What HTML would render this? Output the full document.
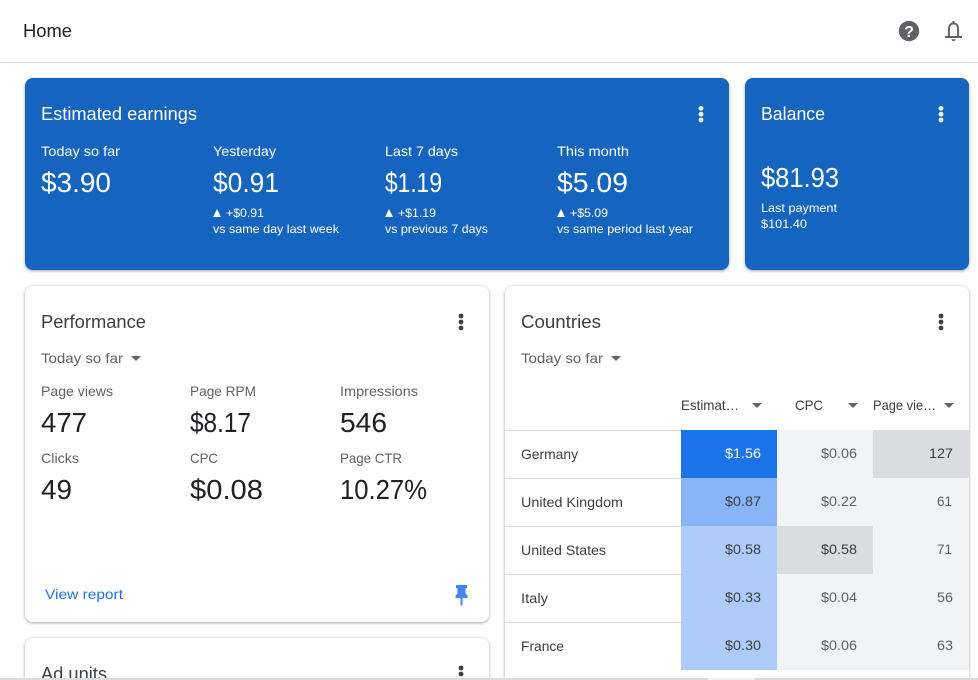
<!DOCTYPE html>
<html lang="en">
<head>
<meta charset="utf-8">
<title>Home</title>
<style>
html,body{margin:0;padding:0;width:978px;height:680px;overflow:hidden;background:#fff}
#root{position:absolute;left:0;top:0;width:978px;height:680px;overflow:hidden;background:#fff}
.c{position:absolute;border-radius:8px;background:#fff;box-shadow:0 1px 2px rgba(60,64,67,.3),0 1px 3px 1px rgba(60,64,67,.15)}
.b{background:#1565c0}
.r{position:absolute;width:96px;height:48px}
.l{position:absolute;left:505px;width:176px;height:1px;background:#dadce0}
svg{position:absolute;left:0;top:0}
text{font-family:"Liberation Sans",Arial,sans-serif;white-space:pre}
.w{fill:#fff}
.t18{font-size:18px}
.t14{font-size:14px}
.t12{font-size:12px}
.t28{font-size:28px}
.g{fill:#5f6368}
.d{fill:#3c4043}
.k{fill:#202124}
</style>
</head>
<body>
<div id="root">
<div style="position:absolute;left:0;top:62px;width:978px;height:1px;background:#dadce0"></div>
<div class="c b" style="left:25px;top:78px;width:704px;height:192px"></div>
<div class="c b" style="left:745px;top:78px;width:224px;height:192px"></div>
<div class="c" style="left:25px;top:286px;width:464px;height:336px"></div>
<div class="c" style="left:25px;top:638px;width:464px;height:60px"></div>
<div class="c" style="left:505px;top:286px;width:464px;height:420px"></div>

<div class="l" style="top:430px"></div>
<div class="l" style="top:478px"></div>
<div class="l" style="top:526px"></div>
<div class="l" style="top:574px"></div>
<div class="l" style="top:622px"></div>

<div class="r" style="left:681px;top:430px;background:#1a73e8"></div>
<div class="r" style="left:681px;top:478px;background:#8ab4f8"></div>
<div class="r" style="left:681px;top:526px;background:#aecbfa"></div>
<div class="r" style="left:681px;top:574px;background:#aecbfa"></div>
<div class="r" style="left:681px;top:622px;background:#aecbfa"></div>
<div class="r" style="left:777px;top:430px;background:#f1f3f4"></div>
<div class="r" style="left:777px;top:478px;background:#f1f3f4"></div>
<div class="r" style="left:777px;top:526px;background:#dadce0"></div>
<div class="r" style="left:777px;top:574px;background:#f1f3f4"></div>
<div class="r" style="left:777px;top:622px;background:#f1f3f4"></div>
<div class="r" style="left:873px;top:430px;background:#dadce0"></div>
<div class="r" style="left:873px;top:478px;background:#f1f3f4"></div>
<div class="r" style="left:873px;top:526px;background:#f1f3f4"></div>
<div class="r" style="left:873px;top:574px;background:#f1f3f4"></div>
<div class="r" style="left:873px;top:622px;background:#f1f3f4"></div>

<svg width="978" height="680" viewBox="0 0 978 680" xmlns="http://www.w3.org/2000/svg">
<defs>
<path id="dn" d="M0 0h10l-5 5z"/>
</defs>
<!-- header -->
<text x="23" y="37" class="t18 k" textLength="49" lengthAdjust="spacingAndGlyphs">Home</text>
<circle cx="909" cy="31" r="10.2" fill="#5f6368"/>
<text x="909" y="37" text-anchor="middle" font-size="16" font-weight="700" fill="#fff">?</text>
<path d="M948.9 37V30c0-4 1.6-6.6 4.6-6.6s4.6 2.6 4.6 6.6v7" fill="none" stroke="#5f6368" stroke-width="2"/>
<path d="M945 36h17v2h-17zM952.5 21h2v3h-2zM951.5 39.2h4c0 1.2-.9 1.8-2 1.8s-2-.6-2-1.8z" fill="#5f6368"/>

<!-- earnings -->
<text x="41" y="120" class="t18 w" textLength="156" lengthAdjust="spacingAndGlyphs">Estimated earnings</text>
<g fill="#fff"><circle cx="701" cy="108.3" r="2.4"/><circle cx="701" cy="114.2" r="2.4"/><circle cx="701" cy="120" r="2.4"/></g>
<text x="41" y="156" class="t14 w" textLength="79" lengthAdjust="spacingAndGlyphs">Today so far</text>
<text x="213" y="156" class="t14 w" textLength="63" lengthAdjust="spacingAndGlyphs">Yesterday</text>
<text x="385" y="156" class="t14 w" textLength="73" lengthAdjust="spacingAndGlyphs">Last 7 days</text>
<text x="557" y="156" class="t14 w" textLength="72" lengthAdjust="spacingAndGlyphs">This month</text>
<text x="41" y="192" class="t28 w" textLength="70" lengthAdjust="spacingAndGlyphs">$3.90</text>
<text x="213" y="192" class="t28 w" textLength="66" lengthAdjust="spacingAndGlyphs">$0.91</text>
<text x="385" y="192" class="t28 w" textLength="57" lengthAdjust="spacingAndGlyphs">$1.19</text>
<text x="557" y="192" class="t28 w" textLength="71" lengthAdjust="spacingAndGlyphs">$5.09</text>
<g fill="#fff"><path d="M213 217l4-8 4 8z"/><path d="M385 217l4-8 4 8z"/><path d="M557 217l4-8 4 8z"/></g>
<text x="226" y="217" class="t12 w" textLength="38" lengthAdjust="spacingAndGlyphs">+$0.91</text>
<text x="398" y="217" class="t12 w" textLength="38" lengthAdjust="spacingAndGlyphs">+$1.19</text>
<text x="570" y="217" class="t12 w" textLength="38" lengthAdjust="spacingAndGlyphs">+$5.09</text>
<text x="213" y="233" class="t12 w" textLength="126" lengthAdjust="spacingAndGlyphs">vs same day last week</text>
<text x="385" y="233" class="t12 w" textLength="103" lengthAdjust="spacingAndGlyphs">vs previous 7 days</text>
<text x="557" y="233" class="t12 w" textLength="136" lengthAdjust="spacingAndGlyphs">vs same period last year</text>

<!-- balance -->
<text x="761" y="120" class="t18 w" textLength="64" lengthAdjust="spacingAndGlyphs">Balance</text>
<g fill="#fff"><circle cx="941" cy="108.3" r="2.4"/><circle cx="941" cy="114.2" r="2.4"/><circle cx="941" cy="120" r="2.4"/></g>
<text x="761" y="187" class="t28 w" textLength="78" lengthAdjust="spacingAndGlyphs">$81.93</text>
<text x="761" y="212" class="t12 w" textLength="76" lengthAdjust="spacingAndGlyphs">Last payment</text>
<text x="761" y="228" class="t12 w" textLength="46" lengthAdjust="spacingAndGlyphs">$101.40</text>

<!-- performance -->
<text x="41" y="328" class="t18 d" textLength="105" lengthAdjust="spacingAndGlyphs">Performance</text>
<g fill="#3c4043"><circle cx="461" cy="316" r="2.4"/><circle cx="461" cy="322" r="2.4"/><circle cx="461" cy="328" r="2.4"/></g>
<text x="41" y="363" class="t14 g" textLength="82" lengthAdjust="spacingAndGlyphs">Today so far</text>
<use href="#dn" x="131" y="356" fill="#5f6368"/>
<text x="41" y="396" class="t14 g" textLength="72" lengthAdjust="spacingAndGlyphs">Page views</text>
<text x="190" y="396" class="t14 g" textLength="66" lengthAdjust="spacingAndGlyphs">Page RPM</text>
<text x="340" y="396" class="t14 g" textLength="78" lengthAdjust="spacingAndGlyphs">Impressions</text>
<text x="41" y="432" class="t28 k" textLength="46" lengthAdjust="spacingAndGlyphs">477</text>
<text x="190" y="432" class="t28 k" textLength="61" lengthAdjust="spacingAndGlyphs">$8.17</text>
<text x="340" y="432" class="t28 k" textLength="47" lengthAdjust="spacingAndGlyphs">546</text>
<text x="41" y="463" class="t14 g" textLength="38" lengthAdjust="spacingAndGlyphs">Clicks</text>
<text x="190" y="463" class="t14 g" textLength="28" lengthAdjust="spacingAndGlyphs">CPC</text>
<text x="340" y="463" class="t14 g" textLength="62" lengthAdjust="spacingAndGlyphs">Page CTR</text>
<text x="41" y="499" class="t28 k" textLength="31" lengthAdjust="spacingAndGlyphs">49</text>
<text x="190" y="499" class="t28 k" textLength="73" lengthAdjust="spacingAndGlyphs">$0.08</text>
<text x="340" y="499" class="t28 k" textLength="87" lengthAdjust="spacingAndGlyphs">10.27%</text>
<text x="45" y="599" class="t14" fill="#1a73e8" textLength="78" lengthAdjust="spacingAndGlyphs">View report</text>
<path fill="#4285f4" d="M456 585h11v3l-1.5.5v5l2 2v2.5h-5v7l-1 .8-1-.8v-7h-5v-2.5l2-2v-5l-1.5-.5z"/>

<!-- ad units -->
<text x="41" y="680" class="t18 d" textLength="66" lengthAdjust="spacingAndGlyphs">Ad units</text>
<g fill="#3c4043"><circle cx="461" cy="668" r="2.4"/><circle cx="461" cy="674" r="2.4"/></g>

<!-- countries -->
<text x="521" y="328" class="t18 d" textLength="80" lengthAdjust="spacingAndGlyphs">Countries</text>
<g fill="#3c4043"><circle cx="941" cy="316" r="2.4"/><circle cx="941" cy="322" r="2.4"/><circle cx="941" cy="328" r="2.4"/></g>
<text x="521" y="363" class="t14 g" textLength="82" lengthAdjust="spacingAndGlyphs">Today so far</text>
<use href="#dn" x="611" y="356" fill="#5f6368"/>
<text x="681" y="410" class="t14 d" textLength="58" lengthAdjust="spacingAndGlyphs">Estimat…</text>
<use href="#dn" x="752" y="403" fill="#5f6368"/>
<text x="795" y="410" class="t14 d" textLength="28" lengthAdjust="spacingAndGlyphs">CPC</text>
<use href="#dn" x="848" y="403" fill="#5f6368"/>
<text x="873" y="410" class="t14 d" textLength="63" lengthAdjust="spacingAndGlyphs">Page vie…</text>
<use href="#dn" x="944" y="403" fill="#5f6368"/>

<text x="521" y="459" class="t14 d" textLength="57" lengthAdjust="spacingAndGlyphs">Germany</text>
<text x="521" y="507" class="t14 d" textLength="102" lengthAdjust="spacingAndGlyphs">United Kingdom</text>
<text x="521" y="555" class="t14 d" textLength="85" lengthAdjust="spacingAndGlyphs">United States</text>
<text x="521" y="603" class="t14 d" textLength="27" lengthAdjust="spacingAndGlyphs">Italy</text>
<text x="521" y="651" class="t14 d" textLength="43" lengthAdjust="spacingAndGlyphs">France</text>

<text x="725" y="458" class="t14 w" textLength="36" lengthAdjust="spacingAndGlyphs">$1.56</text>
<text x="725" y="506" class="t14 d" textLength="36" lengthAdjust="spacingAndGlyphs">$0.87</text>
<text x="725" y="554" class="t14 d" textLength="36" lengthAdjust="spacingAndGlyphs">$0.58</text>
<text x="725" y="602" class="t14 d" textLength="36" lengthAdjust="spacingAndGlyphs">$0.33</text>
<text x="725" y="650" class="t14 d" textLength="36" lengthAdjust="spacingAndGlyphs">$0.30</text>

<text x="821" y="458" class="t14 g" textLength="36" lengthAdjust="spacingAndGlyphs">$0.06</text>
<text x="821" y="506" class="t14 g" textLength="36" lengthAdjust="spacingAndGlyphs">$0.22</text>
<text x="821" y="554" class="t14 d" textLength="36" lengthAdjust="spacingAndGlyphs">$0.58</text>
<text x="821" y="602" class="t14 g" textLength="36" lengthAdjust="spacingAndGlyphs">$0.04</text>
<text x="821" y="650" class="t14 g" textLength="36" lengthAdjust="spacingAndGlyphs">$0.06</text>

<text x="929" y="458" class="t14 d" textLength="24" lengthAdjust="spacingAndGlyphs">127</text>
<text x="937" y="506" class="t14 g" textLength="15" lengthAdjust="spacingAndGlyphs">61</text>
<text x="937" y="554" class="t14 g" textLength="15" lengthAdjust="spacingAndGlyphs">71</text>
<text x="937" y="602" class="t14 g" textLength="16" lengthAdjust="spacingAndGlyphs">56</text>
<text x="937" y="650" class="t14 g" textLength="16" lengthAdjust="spacingAndGlyphs">63</text>
</svg>

<!-- bottom scrollbar -->
<div style="position:absolute;left:0;top:678px;width:978px;height:2px;background:#dcdcdc"></div>
<div style="position:absolute;left:708px;top:678px;width:47px;height:2px;background:#f1f1f1"></div>
</div>
</body>
</html>
